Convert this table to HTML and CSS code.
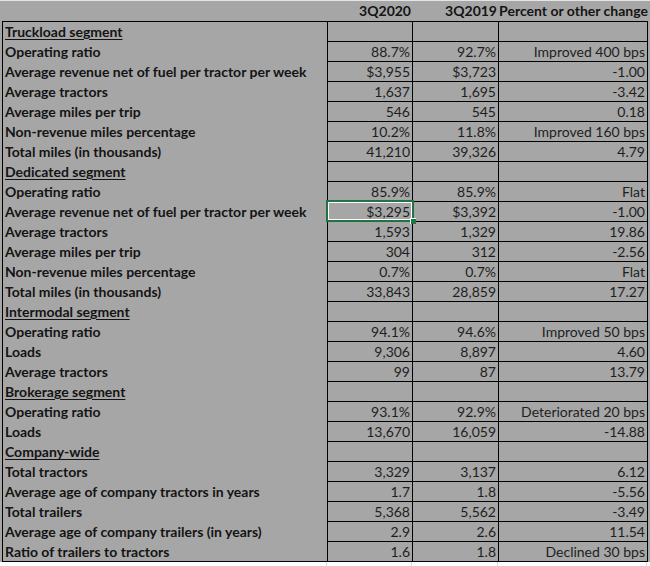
FILE: index.html
```html
<!DOCTYPE html>
<html>
<head>
<meta charset="utf-8">
<link rel="stylesheet" href="styles.css">
</head>
<body>
<div class="page">
  <div class="head">
    <div class="hc"></div>
    <div class="hc num">3Q2020</div>
    <div class="hc num">3Q2019</div>
    <div class="hc num">Percent or other change</div>
  </div>
  <div class="sheet">
    <div class="lab seg">Truckload segment</div><div class="c"></div><div class="c"></div><div class="c"></div>
    <div class="lab">Operating ratio</div><div class="c">88.7%</div><div class="c">92.7%</div><div class="c">Improved 400 bps</div>
    <div class="lab">Average revenue net of fuel per tractor per week</div><div class="c">$3,955</div><div class="c">$3,723</div><div class="c">-1.00</div>
    <div class="lab">Average tractors</div><div class="c">1,637</div><div class="c">1,695</div><div class="c">-3.42</div>
    <div class="lab">Average miles per trip</div><div class="c">546</div><div class="c">545</div><div class="c">0.18</div>
    <div class="lab">Non-revenue miles percentage</div><div class="c">10.2%</div><div class="c">11.8%</div><div class="c">Improved 160 bps</div>
    <div class="lab">Total miles (in thousands)</div><div class="c">41,210</div><div class="c">39,326</div><div class="c">4.79</div>
    <div class="lab seg">Dedicated segment</div><div class="c"></div><div class="c"></div><div class="c"></div>
    <div class="lab">Operating ratio</div><div class="c">85.9%</div><div class="c">85.9%</div><div class="c">Flat</div>
    <div class="lab">Average revenue net of fuel per tractor per week</div><div class="c sel">$3,295<span class="selbox"></span><span class="handle"></span></div><div class="c">$3,392</div><div class="c">-1.00</div>
    <div class="lab">Average tractors</div><div class="c">1,593</div><div class="c">1,329</div><div class="c">19.86</div>
    <div class="lab">Average miles per trip</div><div class="c">304</div><div class="c">312</div><div class="c">-2.56</div>
    <div class="lab">Non-revenue miles percentage</div><div class="c">0.7%</div><div class="c">0.7%</div><div class="c">Flat</div>
    <div class="lab">Total miles (in thousands)</div><div class="c">33,843</div><div class="c">28,859</div><div class="c">17.27</div>
    <div class="lab seg">Intermodal segment</div><div class="c"></div><div class="c"></div><div class="c"></div>
    <div class="lab">Operating ratio</div><div class="c">94.1%</div><div class="c">94.6%</div><div class="c">Improved 50 bps</div>
    <div class="lab">Loads</div><div class="c">9,306</div><div class="c">8,897</div><div class="c">4.60</div>
    <div class="lab">Average tractors</div><div class="c">99</div><div class="c">87</div><div class="c">13.79</div>
    <div class="lab seg">Brokerage segment</div><div class="c"></div><div class="c"></div><div class="c"></div>
    <div class="lab">Operating ratio</div><div class="c">93.1%</div><div class="c">92.9%</div><div class="c">Deteriorated 20 bps</div>
    <div class="lab">Loads</div><div class="c">13,670</div><div class="c">16,059</div><div class="c">-14.88</div>
    <div class="lab seg">Company-wide</div><div class="c"></div><div class="c"></div><div class="c"></div>
    <div class="lab">Total tractors</div><div class="c">3,329</div><div class="c">3,137</div><div class="c">6.12</div>
    <div class="lab">Average age of company tractors in years</div><div class="c">1.7</div><div class="c">1.8</div><div class="c">-5.56</div>
    <div class="lab">Total trailers</div><div class="c">5,368</div><div class="c">5,562</div><div class="c">-3.49</div>
    <div class="lab">Average age of company trailers (in years)</div><div class="c">2.9</div><div class="c">2.6</div><div class="c">11.54</div>
    <div class="lab last">Ratio of trailers to tractors</div><div class="c">1.6</div><div class="c">1.8</div><div class="c">Declined 30 bps</div>
  </div>
  <div class="below">
    <div class="g"></div><div class="g"></div><div class="g"></div><div class="g"></div>
  </div>
</div>
</body>
</html>
```
FILE: styles.css
```css
html, body {
  margin: 0;
  padding: 0;
  background: #ffffff;
}
.page {
  width: 650px;
  height: 566px;
  overflow: hidden;
  font-family: Lato, "Liberation Sans", sans-serif;
  font-size: 14px;
  color: #141414;
}
.head {
  display: grid;
  grid-template-columns: 328px 85px 86px 151px;
  height: 20px;
  border-top: 1px solid #e4e4e4;
  background: #a6a6a6;
  font-weight: bold;
  line-height: 20px;
}
.hc {
  white-space: nowrap;
  padding-right: 2px;
}
.num {
  text-align: right;
}
.sheet {
  display: grid;
  grid-template-columns: 325px 85px 86px 149px;
  grid-auto-rows: 20px;
  margin-left: 2px;
  width: 645px;
  border-top: 1px solid #000;
  border-left: 1px solid #000;
  background-color: #a6a6a6;
  box-shadow: -2px 0 0 #a6a6a6, 3px 0 0 #a6a6a6;
}
.lab {
  border-right: 1px solid #000;
  font-weight: bold;
  padding-left: 2px;
  line-height: 20px;
  white-space: nowrap;
  overflow: hidden;
}
.lab.last {
  border-bottom: 1px solid #000;
}
.seg {
  text-decoration: underline;
  text-underline-offset: 2px;
}
.c {
  border-right: 1px solid #000;
  border-bottom: 1px solid #000;
  text-align: right;
  padding-right: 2px;
  line-height: 20px;
  white-space: nowrap;
  color: #1e1e1e;
}
.sel {
  position: relative;
}
.selbox {
  position: absolute;
  left: -2px;
  top: -2px;
  width: 84px;
  height: 18px;
  border: 2px solid #217346;
  box-shadow: inset 0 0 0 1px #ffffff;
}
.handle {
  position: absolute;
  right: -4px;
  bottom: -3px;
  width: 5px;
  height: 5px;
  background: #217346;
  border-top: 1px solid #ffffff;
  border-left: 1px solid #ffffff;
}
.below {
  display: grid;
  grid-template-columns: 328px 85px 86px 149px;
  height: 10px;
  margin-left: -1px;
}
.g {
  border-right: 1px solid #dcdcdc;
}
```
